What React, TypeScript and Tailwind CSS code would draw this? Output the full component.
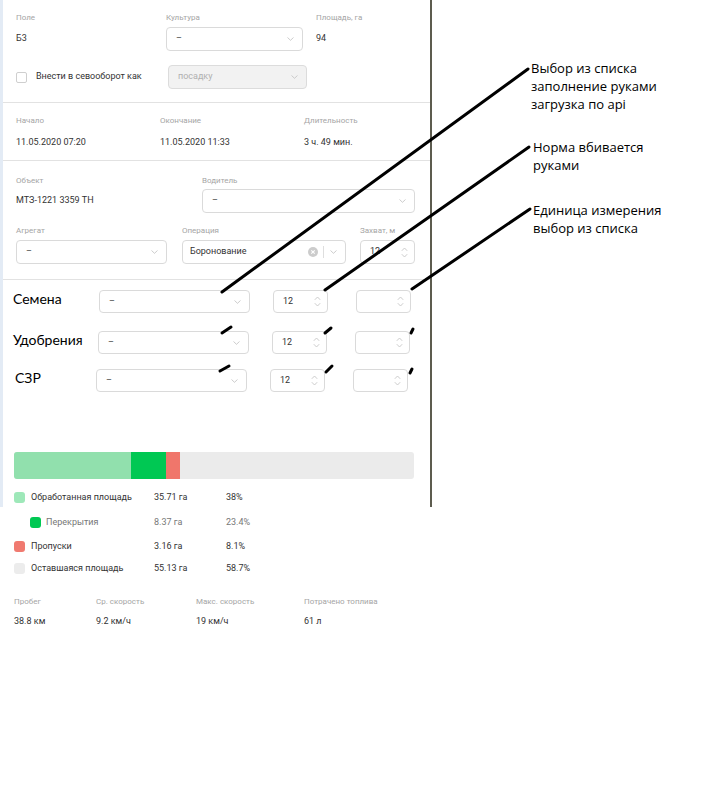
import React from "react";

const Chevron = () => (
  <svg width="7" height="4" viewBox="0 0 7 4" className="shrink-0">
    <path d="M0.5 0.5 L3.5 3.3 L6.5 0.5" fill="none" stroke="#c6c6c6" strokeWidth="0.9" />
  </svg>
);

const Spin = () => (
  <svg width="7" height="11" viewBox="0 0 7 11" className="shrink-0">
    <path d="M0.8 3.8 L3.5 1 L6.2 3.8 M0.8 7.2 L3.5 10 L6.2 7.2" fill="none" stroke="#c6c6c6" strokeWidth="0.9" />
  </svg>
);

const Label = ({ children }: { children: React.ReactNode }) => (
  <div className="text-[8px] leading-[10px] text-[#a5a5a5] whitespace-nowrap">{children}</div>
);

const Select = ({
  className,
  children,
  disabled,
}: {
  className: string;
  children?: React.ReactNode;
  disabled?: boolean;
}) => (
  <div
    className={
      "flex shrink-0 items-center justify-between rounded-[4px] border pl-[9px] pr-[8px] text-[9px] " +
      (disabled
        ? "border-[#dcdcdc] bg-[#f2f2f2] text-[#b0b0b0] "
        : "border-[#dadada] bg-white text-[#444] ") +
      className
    }
  >
    <span>{children}</span>
    <Chevron />
  </div>
);

const NumberInput = ({ className, value }: { className: string; value?: string }) => (
  <div
    className={
      "flex shrink-0 items-center justify-between rounded-[4px] border border-[#dadada] bg-white pl-[9px] pr-[6px] text-[9px] text-[#333] " +
      className
    }
  >
    <span>{value}</span>
    <Spin />
  </div>
);

const Dot = ({ className }: { className: string }) => (
  <div className={"w-[11px] h-[11px] rounded-[3px] shrink-0 " + className} />
);

export default function App() {
  return (
    <div className="relative w-[705px] h-[797px] bg-white overflow-hidden font-['Roboto',sans-serif]">
      <div className="flex">
        <div className="w-[432px] shrink-0">
          <div className="h-[507px] border-l-[3px] border-l-[#e3ebf5] border-r-2 border-r-[#5d5c4f]">
            {/* field */}
            <div className="pl-[13px] pt-[13px] pb-[13px] border-b border-[#e2e2e2]">
              <div className="flex">
                <div className="w-[150px] shrink-0">
                  <Label>Поле</Label>
                  <div className="mt-[4px] h-[24px] flex items-center text-[9px] text-[#333]">Б3</div>
                </div>
                <div className="w-[150px] shrink-0">
                  <Label>Культура</Label>
                  <Select className="mt-[4px] w-[137px] h-[24px]">–</Select>
                </div>
                <div>
                  <Label>Площадь, га</Label>
                  <div className="mt-[4px] h-[24px] flex items-center text-[9px] text-[#333]">94</div>
                </div>
              </div>
              <div className="mt-[14px] flex items-center">
                <div className="w-[152px] shrink-0 flex items-center">
                  <div className="w-[11px] h-[11px] rounded-[2px] border border-[#cfcfcf] bg-white" />
                  <span className="ml-[9px] text-[9px] text-[#333]">Внести в севооборот как</span>
                </div>
                <Select disabled className="w-[139px] h-[24px]">
                  посадку
                </Select>
              </div>
            </div>

            {/* time */}
            <div className="pl-[13px] pt-[13px] pb-[13px] border-b border-[#e2e2e2] flex">
              {[
                ["Начало", "11.05.2020 07:20"],
                ["Окончание", "11.05.2020 11:33"],
                ["Длительность", "3 ч. 49 мин."],
              ].map(([l, v]) => (
                <div key={l} className="w-[144px] shrink-0">
                  <Label>{l}</Label>
                  <div className="mt-[11px] text-[9px] leading-[10px] text-[#333]">{v}</div>
                </div>
              ))}
            </div>

            {/* vehicle */}
            <div className="pl-[13px] pt-[15px] pb-[15px] border-b border-[#e2e2e2]">
              <div className="flex">
                <div className="w-[186px] shrink-0">
                  <Label>Объект</Label>
                  <div className="mt-[3px] h-[24px] flex items-center text-[9px] text-[#333]">МТЗ-1221 3359 TH</div>
                </div>
                <div>
                  <Label>Водитель</Label>
                  <Select className="mt-[3px] w-[213px] h-[24px]">–</Select>
                </div>
              </div>
              <div className="mt-[13px] flex">
                <div className="w-[166px] shrink-0">
                  <Label>Агрегат</Label>
                  <Select className="mt-[4px] w-[151px] h-[24px]">–</Select>
                </div>
                <div className="w-[178px] shrink-0">
                  <Label>Операция</Label>
                  <div className="mt-[4px] w-[164px] h-[24px] flex items-center rounded-[4px] border border-[#dadada] pl-[7px] pr-[8px] text-[9px] text-[#333]">
                    <span className="flex-1">Боронование</span>
                    <svg width="10" height="10" viewBox="0 0 10 10" className="shrink-0">
                      <circle cx="5" cy="5" r="5" fill="#cccccc" />
                      <path d="M3.3 3.3 L6.7 6.7 M6.7 3.3 L3.3 6.7" stroke="#fff" strokeWidth="1.1" />
                    </svg>
                    <div className="ml-[5px] w-px h-[12px] bg-[#dedede]" />
                    <div className="ml-[6px]">
                      <Chevron />
                    </div>
                  </div>
                </div>
                <div>
                  <Label>Захват, м</Label>
                  <NumberInput className="mt-[4px] w-[55px] h-[24px]" value="12" />
                </div>
              </div>
            </div>

            {/* materials */}
            <div className="pt-[10px] font-['Lato',sans-serif]">
              <div className="flex items-center pl-[10px]">
                <div className="w-[86px] shrink-0 pb-[5px] text-[14px] leading-[16px] text-black">Семена</div>
                <Select className="w-[151px] h-[23px] font-['Roboto',sans-serif]">–</Select>
                <NumberInput className="ml-[23px] w-[55px] h-[23px] font-['Roboto',sans-serif]" value="12" />
                <NumberInput className="ml-[28px] w-[55px] h-[23px]" />
              </div>
              <div className="mt-[18px] flex items-center pl-[10px]">
                <div className="w-[85px] shrink-0 pb-[5px] text-[14px] leading-[16px] text-black">Удобрения</div>
                <Select className="w-[151px] h-[23px] font-['Roboto',sans-serif]">–</Select>
                <NumberInput className="ml-[23px] w-[55px] h-[23px] font-['Roboto',sans-serif]" value="12" />
                <NumberInput className="ml-[28px] w-[55px] h-[23px]" />
              </div>
              <div className="mt-[15px] flex items-center pl-[12px]">
                <div className="w-[81px] shrink-0 pb-[5px] text-[14px] leading-[16px] text-black">СЗР</div>
                <Select className="w-[151px] h-[23px] font-['Roboto',sans-serif]">–</Select>
                <NumberInput className="ml-[23px] w-[55px] h-[23px] font-['Roboto',sans-serif]" value="12" />
                <NumberInput className="ml-[28px] w-[55px] h-[23px]" />
              </div>
            </div>

            {/* coverage bar */}
            <div className="pl-[11px] mt-[60px]">
              <div className="flex w-[400px] h-[27px] rounded-[3px] overflow-hidden bg-[#ebebeb]">
                <div className="w-[117px] bg-[#91e0ad]" />
                <div className="w-[35px] bg-[#00c853]" />
                <div className="w-[14px] bg-[#f0766b]" />
              </div>
              <div className="mt-[13px] flex items-center text-[9px] leading-[11px] text-[#333]">
                <Dot className="bg-[#9ee8b9]" />
                <span className="ml-[6px] w-[123px] shrink-0">Обработанная площадь</span>
                <span className="w-[72px] shrink-0">35.71 га</span>
                <span>38%</span>
              </div>
            </div>
          </div>

          {/* lower legend (outside the panel frame) */}
          <div className="pl-[14px] text-[9px] leading-[11px]">
            <div className="mt-[10px] flex items-center pl-[16px] text-[#777]">
              <Dot className="bg-[#00c853]" />
              <span className="ml-[5px] w-[108px] shrink-0">Перекрытия</span>
              <span className="w-[72px] shrink-0">8.37 га</span>
              <span>23.4%</span>
            </div>
            <div className="mt-[13px] flex items-center text-[#333]">
              <Dot className="bg-[#f07a70]" />
              <span className="ml-[6px] w-[123px] shrink-0">Пропуски</span>
              <span className="w-[72px] shrink-0">3.16 га</span>
              <span>8.1%</span>
            </div>
            <div className="mt-[11px] flex items-center text-[#333]">
              <Dot className="bg-[#ececec]" />
              <span className="ml-[6px] w-[123px] shrink-0">Оставшаяся площадь</span>
              <span className="w-[72px] shrink-0">55.13 га</span>
              <span>58.7%</span>
            </div>

            <div className="mt-[23px] flex">
              {[
                ["Пробег", "38.8 км", "w-[82px]"],
                ["Ср. скорость", "9.2 км/ч", "w-[100px]"],
                ["Макс. скорость", "19 км/ч", "w-[108px]"],
                ["Потрачено топлива", "61 л", "w-[110px]"],
              ].map(([l, v, w]) => (
                <div key={l} className={w + " shrink-0"}>
                  <Label>{l}</Label>
                  <div className="mt-[9px] text-[9px] leading-[10px] text-[#333]">{v}</div>
                </div>
              ))}
            </div>
          </div>
        </div>

        {/* annotations */}
        <div className="pt-[59px] pl-[99px] font-['Open_Sans',sans-serif] text-[13px] leading-[18px] text-black">
          <div>
            Выбор из списка
            <br />
            заполнение руками
            <br />
            загрузка по api
          </div>
          <div className="mt-[25px] ml-[2px]">
            Норма вбивается
            <br />
            руками
          </div>
          <div className="mt-[27px] ml-[2px]">
            Единица измерения
            <br />
            выбор из списка
          </div>
        </div>
      </div>

      <svg
        className="absolute left-0 top-0 pointer-events-none"
        width="705"
        height="797"
        viewBox="0 0 705 797"
      >
        <g stroke="#000" strokeWidth="3" strokeLinecap="round" fill="none">
          <path d="M528 69 L222 292" />
          <path d="M529 147 L325 290" />
          <path d="M530 209 L412 289" />
          <path d="M222 333 L231 327" />
          <path d="M325 333 L331 328" />
          <path d="M411 333 L413 329" />
          <path d="M220 371 L229 366" />
          <path d="M326 372 L332 366" />
          <path d="M410 373 L412 369" />
        </g>
      </svg>
    </div>
  );
}
